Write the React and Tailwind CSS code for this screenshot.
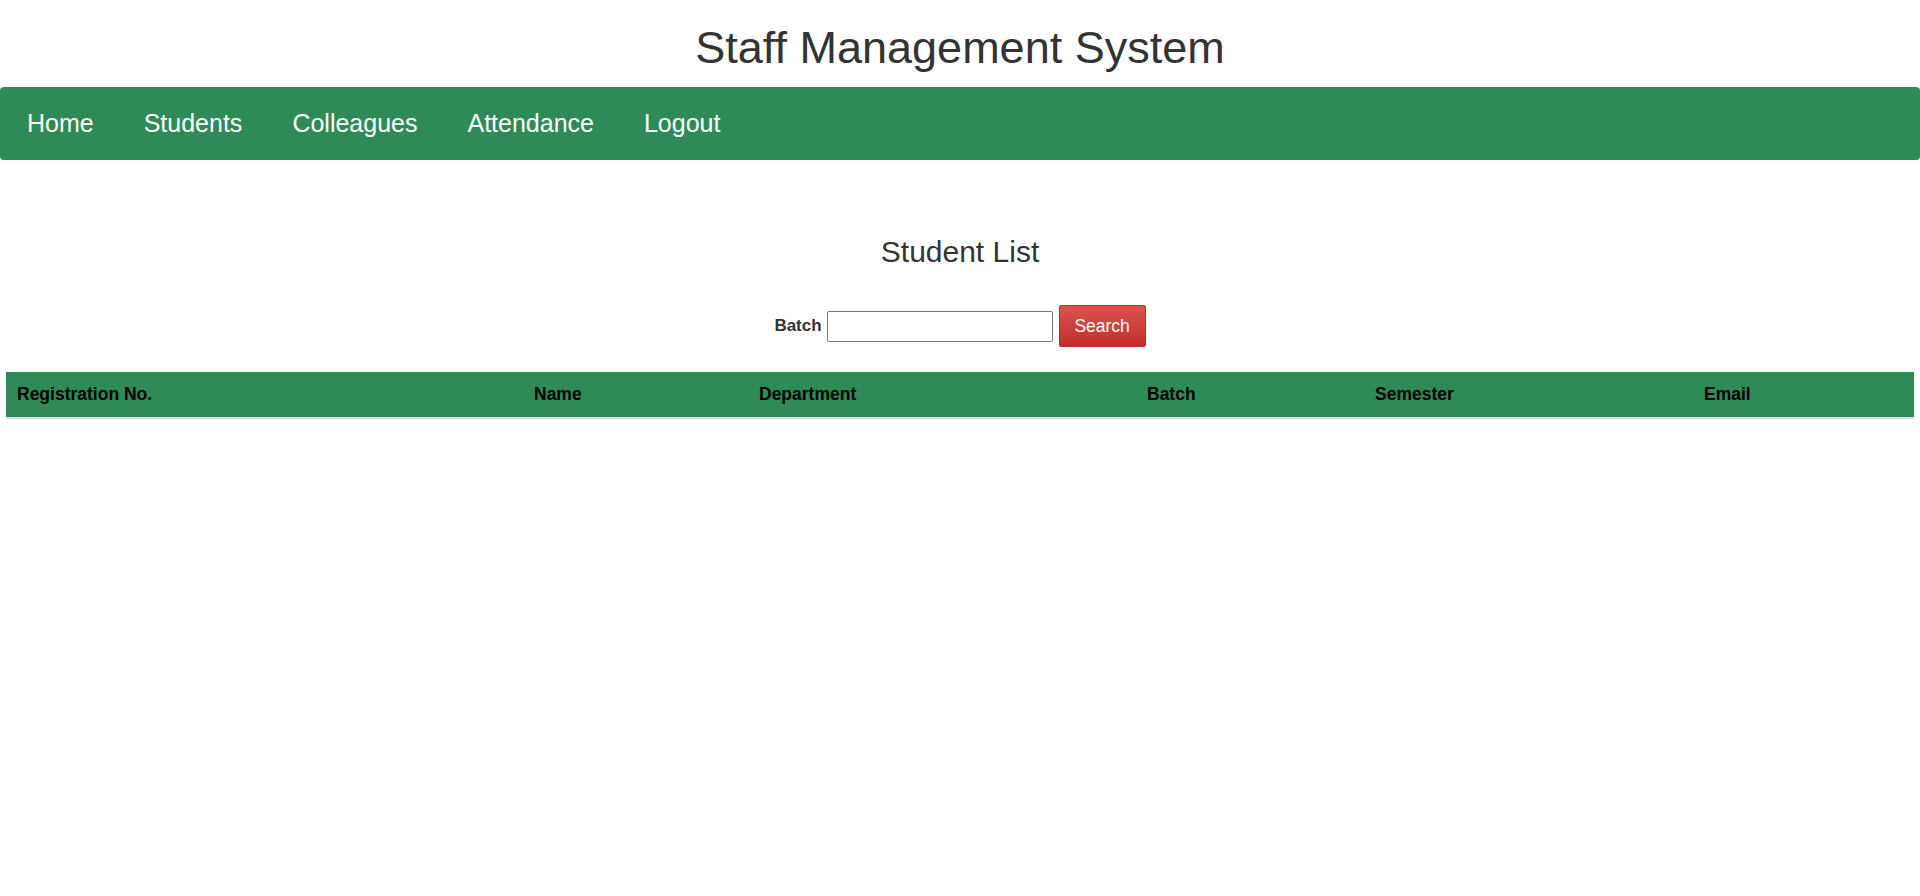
export default function App() {
  const cols = [
    "Registration No.",
    "Name",
    "Department",
    "Batch",
    "Semester",
    "Email",
  ];
  return (
    <div className="min-h-[896px] bg-white text-[#333]" style={{ fontFamily: '"Liberation Sans", Arial, sans-serif' }}>
      <h1 className="pt-[24px] text-center text-[45px] leading-[48px] font-normal text-[#333]">
        Staff Management System
      </h1>
      <nav className="mt-[15px] flex h-[73px] items-center rounded-[4px] bg-[#2e8b57] pl-[2px]">
        {["Home", "Students", "Colleagues", "Attendance", "Logout"].map((t) => (
          <a key={t} className="px-[25px] text-[25px] leading-[73px] text-white">
            {t}
          </a>
        ))}
      </nav>
      <h2 className="mt-[75px] text-center text-[30px] leading-[33px] font-normal text-[#333]">
        Student List
      </h2>
      <div className="mt-[37px] flex items-center justify-center">
        <label className="text-[17px] font-bold text-[#333]">Batch</label>
        <input
          type="text"
          className="ml-[5px] h-[31px] w-[226px] rounded-[2px] border border-[#767676] bg-white px-1 outline-none"
        />
        <button className="ml-[6px] h-[42px] w-[87px] rounded-[2px] border border-[#b92c28] bg-gradient-to-b from-[#d9534f] to-[#c12e2a] text-[17.5px] text-white">
          Search
        </button>
      </div>
      <div className="mx-[6px] mt-[25px] grid grid-cols-[517px_225px_388px_228px_329px_1fr] border-b-2 border-[#ddd] bg-[#2e8b57]">
        {cols.map((c) => (
          <div key={c} className="h-[45px] pl-[11px] text-[17.5px] leading-[45px] font-bold text-black">
            {c}
          </div>
        ))}
      </div>
    </div>
  );
}
